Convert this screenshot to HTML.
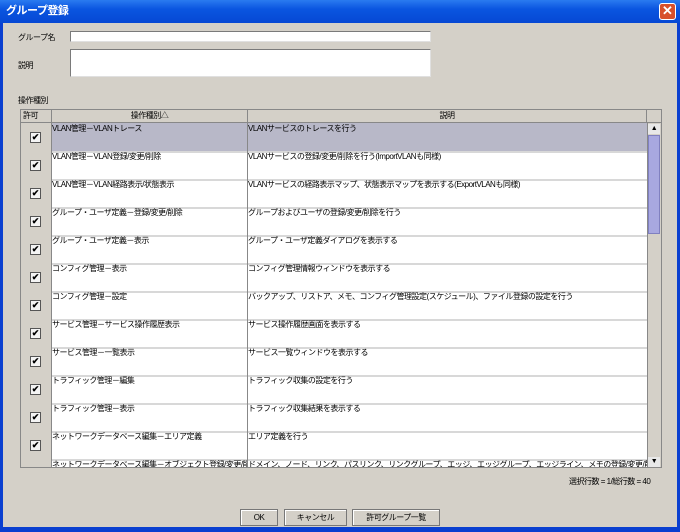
<!DOCTYPE html>
<html><head><meta charset="utf-8"><style>
*{margin:0;padding:0;box-sizing:border-box}
body{width:680px;height:532px;overflow:hidden;background:#0a3fd0;font-family:"Liberation Sans","Noto Sans CJK JP",sans-serif;font-size:8px;letter-spacing:-0.5px;color:#000;position:relative}
.abs{position:absolute}
#title{left:0;top:0;width:680px;height:23px;background:linear-gradient(#2a7bf0,#0a55e0 40%,#0648d4);color:#fff;font-weight:bold;font-size:11px;letter-spacing:-0.5px;line-height:23px;padding-left:6px}
#close{left:659px;top:3px;width:17px;height:17px;background:#d8502c;border:1px solid #fff;border-radius:3px;color:#fff;font-size:13px;line-height:14px;text-align:center;font-weight:bold;letter-spacing:0}
#body{left:3px;top:23px;width:674px;height:504px;background:#d4d0c8}
.inp{background:#fff;border:1px solid #7a7a7a;border-right-color:#e0e0e0;border-bottom-color:#e0e0e0}
#tbl{left:20px;top:109px;width:642px;height:359px;border:1px solid #888;background:#d4d0c8;overflow:hidden}
.hd{top:0;height:13px;background:#d4d0c8;border-right:1px solid #888;border-bottom:1px solid #888;text-align:center;line-height:12px;font-size:8px}
.row{left:0;width:626px;height:28px;background:#fff}
.row .c0{position:absolute;left:0;top:0;width:31px;height:28px;background:#d4d0c8;border-right:1px solid #888}
.row .c1{position:absolute;left:31px;top:0;width:196px;height:28px;border-right:1px solid #888;white-space:nowrap;overflow:hidden;line-height:12px}
.row .c2{position:absolute;left:227px;top:0;width:399px;height:28px;white-space:nowrap;overflow:hidden;line-height:12px}
.row .sep{position:absolute;left:31px;top:0;width:595px;height:2px;background:#d8d8d8}
.cb{position:absolute;left:9px;top:9px;width:11px;height:11px;border:1px solid #555;background:#f4f4f4;font-size:9px;line-height:9px;text-align:center;font-weight:bold;letter-spacing:0}
.sel{background:#b8b8c8}
.btn{top:509px;height:17px;border:1px solid #777;background:#d4d0c8;text-align:center;line-height:15px;font-size:8px;box-shadow:inset 1px 1px #fff}
</style></head><body>
<div id="title" class="abs">グループ登録</div>
<div id="close" class="abs">✕</div>
<div id="body" class="abs"></div>
<div class="abs" style="left:18px;top:32px">グループ名</div>
<div class="abs inp" style="left:70px;top:31px;width:361px;height:11px"></div>
<div class="abs" style="left:18px;top:60px">説明</div>
<div class="abs inp" style="left:70px;top:49px;width:361px;height:28px"></div>
<div class="abs" style="left:18px;top:95px">操作種別</div>
<div id="tbl" class="abs">
 <div class="abs hd" style="left:0;width:31px;text-align:left;padding-left:2px">許可</div>
 <div class="abs hd" style="left:31px;width:196px">操作種別△</div>
 <div class="abs hd" style="left:227px;width:399px">説明</div>
 <div class="abs hd" style="left:626px;width:16px;border-right:0"></div>
 <div class="abs row sel" style="top:13px"><div class="c0"><div class="cb">✔</div></div><div class="c1">VLAN管理－VLANトレース</div><div class="c2">VLANサービスのトレースを行う</div></div>
 <div class="abs row" style="top:41px"><div class="sep"></div><div class="c0"><div class="cb">✔</div></div><div class="c1">VLAN管理－VLAN登録/変更/削除</div><div class="c2">VLANサービスの登録/変更/削除を行う(ImportVLANも同様)</div></div>
 <div class="abs row" style="top:69px"><div class="sep"></div><div class="c0"><div class="cb">✔</div></div><div class="c1">VLAN管理－VLAN経路表示/状態表示</div><div class="c2">VLANサービスの経路表示マップ、状態表示マップを表示する(ExportVLANも同様)</div></div>
 <div class="abs row" style="top:97px"><div class="sep"></div><div class="c0"><div class="cb">✔</div></div><div class="c1">グループ・ユーザ定義－登録/変更/削除</div><div class="c2">グループおよびユーザの登録/変更/削除を行う</div></div>
 <div class="abs row" style="top:125px"><div class="sep"></div><div class="c0"><div class="cb">✔</div></div><div class="c1">グループ・ユーザ定義－表示</div><div class="c2">グループ・ユーザ定義ダイアログを表示する</div></div>
 <div class="abs row" style="top:153px"><div class="sep"></div><div class="c0"><div class="cb">✔</div></div><div class="c1">コンフィグ管理－表示</div><div class="c2">コンフィグ管理情報ウィンドウを表示する</div></div>
 <div class="abs row" style="top:181px"><div class="sep"></div><div class="c0"><div class="cb">✔</div></div><div class="c1">コンフィグ管理－設定</div><div class="c2">バックアップ、リストア、メモ、コンフィグ管理設定(スケジュール)、ファイル登録の設定を行う</div></div>
 <div class="abs row" style="top:209px"><div class="sep"></div><div class="c0"><div class="cb">✔</div></div><div class="c1">サービス管理－サービス操作履歴表示</div><div class="c2">サービス操作履歴画面を表示する</div></div>
 <div class="abs row" style="top:237px"><div class="sep"></div><div class="c0"><div class="cb">✔</div></div><div class="c1">サービス管理－一覧表示</div><div class="c2">サービス一覧ウィンドウを表示する</div></div>
 <div class="abs row" style="top:265px"><div class="sep"></div><div class="c0"><div class="cb">✔</div></div><div class="c1">トラフィック管理－編集</div><div class="c2">トラフィック収集の設定を行う</div></div>
 <div class="abs row" style="top:293px"><div class="sep"></div><div class="c0"><div class="cb">✔</div></div><div class="c1">トラフィック管理－表示</div><div class="c2">トラフィック収集結果を表示する</div></div>
 <div class="abs row" style="top:321px"><div class="sep"></div><div class="c0"><div class="cb">✔</div></div><div class="c1">ネットワークデータベース編集－エリア定義</div><div class="c2">エリア定義を行う</div></div>
 <div class="abs row" style="top:349px"><div class="sep"></div><div class="c0"></div><div class="c1">ネットワークデータベース編集－オブジェクト登録/変更/削除</div><div class="c2">ドメイン、ノード、リンク、パスリンク、リンクグループ、エッジ、エッジグループ、エッジライン、メモの登録/変更/削除とオ</div></div>
 <div class="abs" style="left:626px;top:13px;width:15px;height:345px;background:#d4d0c8;border-left:1px solid #888"></div>
 <div class="abs" style="left:627px;top:14px;width:12px;height:10px;background:#e8e8e8;font-size:7px;text-align:center;line-height:10px">▲</div>
 <div class="abs" style="left:627px;top:25px;width:12px;height:99px;background:#a8a8e0;border:1px solid #8080c0"></div>
 <div class="abs" style="left:627px;top:347px;width:12px;height:10px;background:#e8e8e8;font-size:7px;text-align:center;line-height:10px">▼</div>
</div>
<div class="abs" style="left:569px;top:476px;font-size:8px">選択行数 = 1/総行数 = 40</div>
<div class="abs btn" style="left:240px;width:38px">OK</div>
<div class="abs btn" style="left:284px;width:63px">キャンセル</div>
<div class="abs btn" style="left:352px;width:88px">許可グループ一覧</div>
</body></html>
